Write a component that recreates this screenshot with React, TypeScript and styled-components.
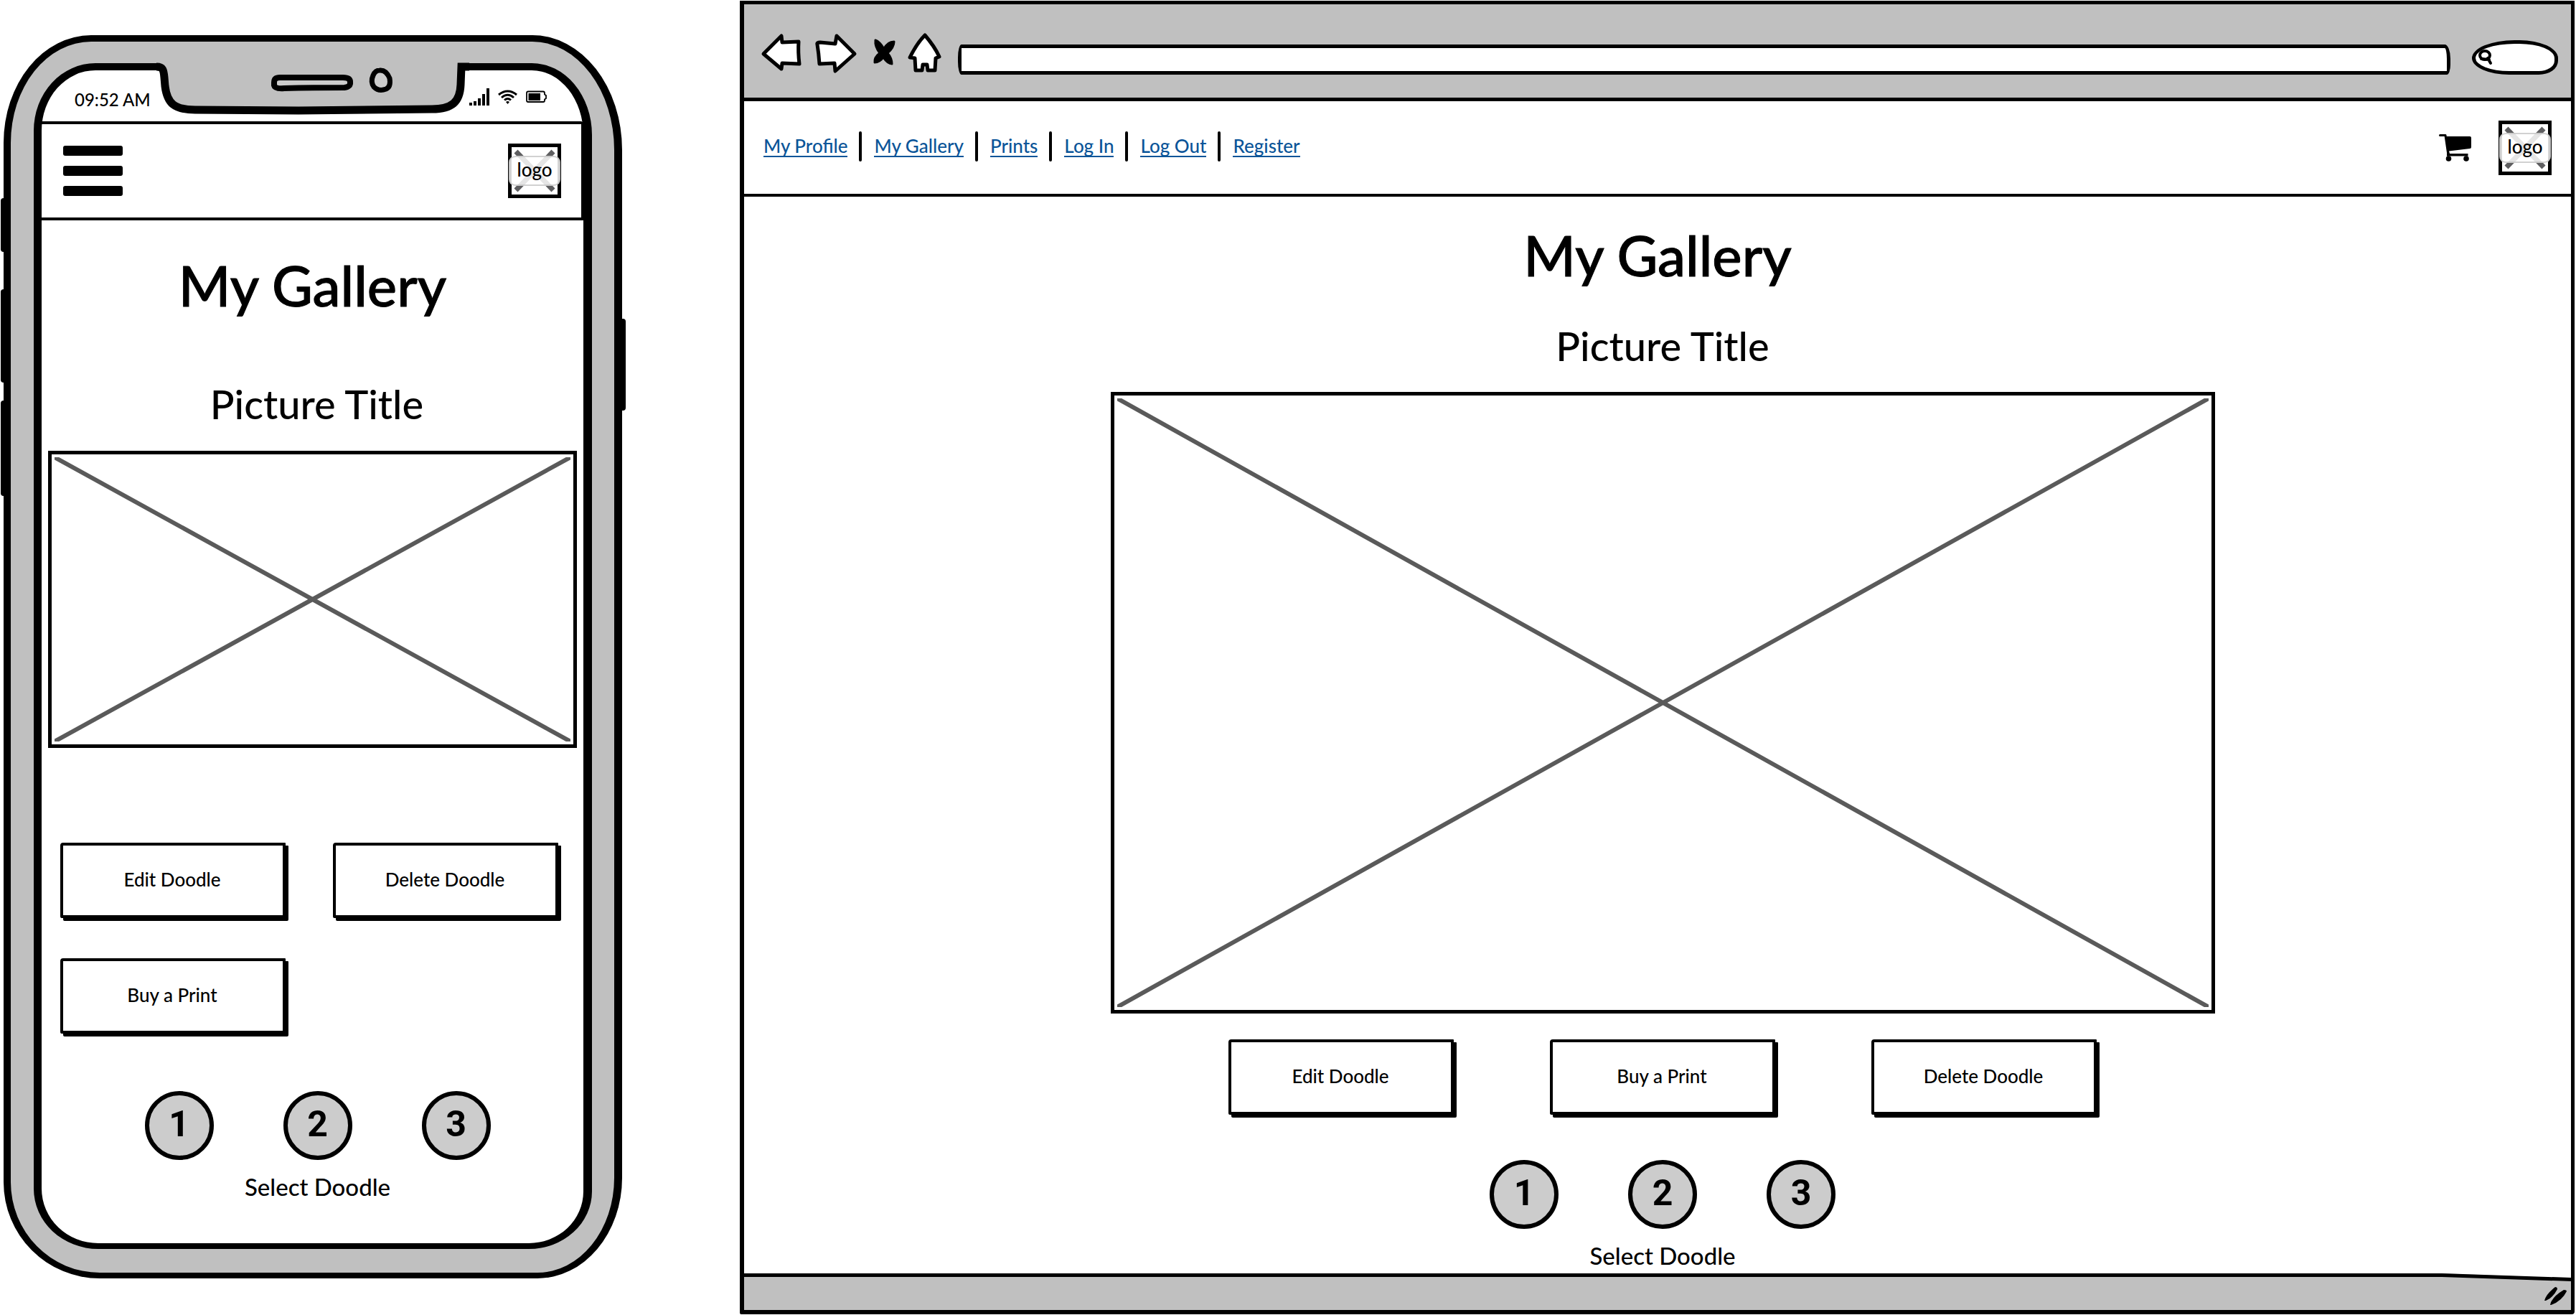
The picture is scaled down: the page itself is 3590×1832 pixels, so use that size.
import React from "react";
import styled, { createGlobalStyle } from "styled-components";

const INK = "#000";
const CHROME = "#c0c0c0";

const GlobalStyle = createGlobalStyle`
  *, *::before, *::after { box-sizing: border-box; }
  body {
    margin: 0;
    background: #fff;
    color: ${INK};
    font-family: Lato, "Open Sans", sans-serif;
    font-weight: 500;
  }
  button, input { font: inherit; color: inherit; }
  svg { display: block; }
`;

const Page = styled.main`
  display: grid;
  grid-template-columns: minmax(0, 862fr) minmax(0, 2557fr);
  column-gap: 164px;
  align-items: start;
  padding: 1px 2px 1px 5px;
`;

/* ---------- shared parts ---------- */

const Title = styled.h1`
  margin: 0;
  font-size: 78px;
  line-height: 98px;
  font-weight: 500;
  text-align: center;
  -webkit-text-stroke: 1px ${INK};
`;

const PictureTitle = styled.h2`
  margin: 0;
  font-size: 56px;
  line-height: 66px;
  font-weight: 500;
  text-align: center;
`;

const PictureFrame = styled.div<{ $ratio: string }>`
  width: 100%;
  aspect-ratio: ${(p) => p.$ratio};
  border: 5px solid ${INK};
  padding: 4px;
  background: #fff;

  svg { width: 100%; height: 100%; }
`;

const ActionButton = styled.button`
  height: 105px;
  padding: 0 2px 4px 0;
  border: 4px solid ${INK};
  border-radius: 4px 1px 2px 2px;
  background: #fff;
  box-shadow: 4px 4px 0 ${INK};
  font-size: 26px;
  line-height: 32px;
`;

const Pager = styled.div`
  display: flex;
  flex-direction: column;
  align-items: center;
  gap: 16px;
`;

const PagerRow = styled.div`
  display: flex;
  gap: 97px;
`;

const PagerButton = styled.button`
  width: 96px;
  height: 96px;
  padding: 0 0 4px;
  border: 6px solid ${INK};
  border-radius: 50%;
  background: #ccc;
  font-family: Roboto, Lato, sans-serif;
  font-size: 50px;
  line-height: 56px;
  font-weight: 700;
`;

const PagerLabel = styled.p`
  margin: 0;
  font-size: 33px;
  line-height: 42px;
`;

const LogoLink = styled.a`
  display: grid;
  grid-template: 66px / 64px;
  place-items: center;
  place-content: center;
  width: 74px;
  height: 76px;
  border: 5px solid ${INK};
  color: inherit;
  text-decoration: none;

  > * { grid-area: 1 / 1; }
`;

const LogoCaption = styled.span`
  width: 72px;
  height: 42px;
  border: 2px solid rgba(190, 190, 190, 0.7);
  border-radius: 9px;
  background: rgba(255, 255, 255, 0.84);
  font-size: 26px;
  line-height: 34px;
  text-align: center;
`;

function Logo() {
  return (
    <LogoLink href="#home">
      <svg width="64" height="66" viewBox="0 0 64 66" stroke="#5e5e60" strokeWidth="7" aria-hidden="true">
        <path d="M6 6 58 60M58 6 6 60" />
      </svg>
      <LogoCaption>logo</LogoCaption>
    </LogoLink>
  );
}

function Picture({ ratio }: { ratio: string }) {
  return (
    <PictureFrame $ratio={ratio} role="img" aria-label="Picture">
      <svg viewBox="0 0 100 100" preserveAspectRatio="none" stroke="#5a5a5a" strokeWidth="6" aria-hidden="true">
        <path d="M0 0 100 100M100 0 0 100" vectorEffect="non-scaling-stroke" />
      </svg>
    </PictureFrame>
  );
}

function DoodlePager() {
  return (
    <Pager>
      <PagerRow>
        {[1, 2, 3].map((n) => (
          <PagerButton key={n} type="button">{n}</PagerButton>
        ))}
      </PagerRow>
      <PagerLabel>Select Doodle</PagerLabel>
    </Pager>
  );
}

/* ---------- phone ---------- */

const PhoneBody = styled.section`
  position: relative;
  margin-top: 48px;
  padding: 30px 31px 33px 32px;
  border: solid ${INK};
  border-width: 9px 11px 8px 10px;
  border-radius: 122px 125px 118px 134px / 150px 160px 140px 134px;
  background: ${CHROME};
`;

const SideKey = styled.span<{ $side: "left" | "right"; $top: number; $height: number }>`
  position: absolute;
  ${(p) => p.$side}: ${(p) => (p.$side === "left" ? "-14px" : "-16px")};
  top: ${(p) => p.$top}px;
  width: 8px;
  height: ${(p) => p.$height}px;
  border-radius: 4px;
  background: ${INK};
`;

const Screen = styled.div`
  position: relative;
  border: solid ${INK};
  border-width: 10px 12px 8px 11px;
  border-radius: 86px 84px 88px 90px / 94px 100px 80px 84px;
  background: #fff;
`;

const Notch = styled.svg`
  position: absolute;
  top: -12px;
  left: 0;
  right: 0;
  margin: 0 auto;
`;

const StatusBar = styled.div`
  display: flex;
  justify-content: space-between;
  align-items: flex-end;
  height: 71px;
  padding: 0 51px 16px 46px;
  font-size: 24px;
  line-height: 28px;
`;

const StatusIcons = styled.div`
  display: flex;
  align-items: center;
  gap: 12px;
  padding-bottom: 6px;
`;

const PhoneHeader = styled.header`
  display: flex;
  justify-content: space-between;
  align-items: center;
  height: 138px;
  padding: 0 28px 0 30px;
  border: solid ${INK};
  border-width: 4px 3px 4px 0;
  border-radius: 0 4px 0 0;
`;

const MenuButton = styled.button`
  display: flex;
  flex-direction: column;
  gap: 14px;
  width: 83px;
  padding: 0;
  border: 0;
  background: none;
`;

const MenuBar = styled.span`
  height: 14px;
  border-radius: 3px;
  background: ${INK};
`;

const PhoneContent = styled.div`
  padding: 41px 0 58px;

  ${PictureTitle} { margin: 84px 0 32px; padding-left: 12px; }
`;

const PhonePicture = styled.div`
  padding: 0 9px;
`;

const PhoneActions = styled.div`
  display: grid;
  grid-template-columns: 1fr 1fr;
  gap: 56px 66px;
  padding: 132px 35px 80px 26px;
`;

const PhonePager = styled.div`
  padding-left: 14px;
`;

function Phone() {
  return (
    <PhoneBody aria-label="Mobile layout">
      <SideKey $side="left" $top={218} $height={75} />
      <SideKey $side="left" $top={345} $height={130} />
      <SideKey $side="left" $top={500} $height={133} />
      <SideKey $side="right" $top={386} $height={128} />
      <Screen>
        <Notch width="440" height="76" viewBox="0 0 440 76" aria-hidden="true">
          <path d="M2 0V2C11 3 13 9 14 20L15 36C18 58 26 67 56 67H386C414 67 426 58 428 34L429 12Q430 6 438 2V0Z" fill={CHROME} />
          <path d="M2 7C11 7 12 11 13 22L14 34C17 58 27 67 56 67L200 68 386 66C414 66 425 56 426 32L427 7H438" fill="none" stroke={INK} strokeWidth="11" />
          <path d="M174 22H262Q272 22 272 28Q273 35 264 36Q220 36 180 37Q167 38 166 33V29Q166 22 174 22Z" fill="#ccc" stroke={INK} strokeWidth="8" />
          <path d="M313 12Q322 11 327 23Q329 35 322 38Q312 42 305 35Q300 28 304 19Q307 12 313 12Z" fill="#ccc" stroke={INK} strokeWidth="7" />
        </Notch>
        <StatusBar>
          <span>09:52 AM</span>
          <StatusIcons>
            <svg width="28" height="24" viewBox="0 0 28 24" aria-label="Signal">
              <path d="M0 20h4v4H0zM6 18h4v6H6zM12 14h4v10h-4zM18 8h4v16h-4zM24 0h4v24h-4z" />
            </svg>
            <svg width="27" height="20" viewBox="0 0 27 20" fill="none" stroke={INK} strokeWidth="3" aria-label="Wi-Fi">
              <path d="M1 7Q13.500-3 26 7M5 11Q13.500 3.500 22 11M9 14.500Q13.500 10.500 18 14.500" />
              <path d="M11 17Q13.500 15 16 17L13.500 20Z" fill={INK} stroke="none" />
            </svg>
            <svg width="29" height="18" viewBox="0 0 29 18" aria-label="Battery">
              <path d="M3 1.500H24Q26 1.500 26 4V5.500L28 7V11L26 12.500V14Q26 16 24 16H3Q1 16 1 14V3.500Q1 1.500 3 1.500Z" fill="none" stroke={INK} strokeWidth="1.800" />
              <path d="M3.500 4H20V14H3.500Z" />
            </svg>
          </StatusIcons>
        </StatusBar>
        <PhoneHeader>
          <MenuButton type="button" aria-label="Menu">
            <MenuBar />
            <MenuBar />
            <MenuBar />
          </MenuButton>
          <Logo />
        </PhoneHeader>
        <PhoneContent>
          <Title>My Gallery</Title>
          <PictureTitle>Picture Title</PictureTitle>
          <PhonePicture>
            <Picture ratio="737 / 414" />
          </PhonePicture>
          <PhoneActions>
            <ActionButton type="button">Edit Doodle</ActionButton>
            <ActionButton type="button">Delete Doodle</ActionButton>
            <ActionButton type="button">Buy a Print</ActionButton>
          </PhoneActions>
          <PhonePager>
            <DoodlePager />
          </PhonePager>
        </PhoneContent>
      </Screen>
    </PhoneBody>
  );
}

/* ---------- browser ---------- */

const BrowserWindow = styled.section`
  border: solid ${INK};
  border-width: 5px 5px 6px 6px;
  border-radius: 0 0 4px 2px;
  background: #fff;
`;

const Toolbar = styled.div`
  display: flex;
  align-items: flex-end;
  gap: 21px;
  height: 135px;
  padding: 0 18px 32px 24px;
  border-bottom: 5px solid ${INK};
  background: ${CHROME};
`;

const ToolButton = styled.button`
  flex: none;
  padding: 0;
  border: 0;
  background: none;

  svg {
    fill: #fff;
    stroke: ${INK};
    stroke-width: 5px;
    stroke-linejoin: round;
    stroke-linecap: round;
    overflow: visible;
  }
`;

const AddressBar = styled.input`
  flex: 1;
  min-width: 0;
  height: 42px;
  padding: 0 12px;
  border: 5px solid ${INK};
  border-radius: 5px 8px 5px 5px / 18px 20px 14px 18px;
  background: #fff;
`;

const SearchBox = styled.label`
  display: flex;
  align-items: center;
  width: 120px;
  height: 48px;
  margin-left: 9px;
  padding-left: 4px;
  border: 5px solid ${INK};
  border-radius: 62px 56px 28px 54px / 26px 26px 20px 24px;
  background: #fff;
`;

const SearchInput = styled.input`
  width: 70px;
  padding: 0;
  border: 0;
  background: none;
  outline: 0;
`;

const SiteHeader = styled.header`
  display: flex;
  align-items: center;
  height: 133px;
  padding: 0 27px 0 27px;
  border-bottom: 4px solid ${INK};
`;

const SiteNav = styled.nav`
  display: flex;
  align-items: center;
  flex: 1;
  padding-bottom: 3px;
`;

const NavItem = styled.span`
  display: flex;
  align-items: center;

  & + &::before {
    content: "";
    width: 4px;
    height: 42px;
    margin: 0 17px 0 16px;
    border-radius: 2px;
    background: ${INK};
  }
`;

const NavLink = styled.a`
  border-bottom: 2px solid #0b5599;
  color: #0b5599;
  font-size: 26px;
  line-height: 28px;
  text-decoration: none;
`;

const CartLink = styled.a`
  margin-right: 38px;
  color: inherit;
`;

const SiteContent = styled.div`
  padding: 32px 0 4px;
`;

const Gallery = styled.div`
  display: flex;
  flex-direction: column;
  align-items: center;
  padding-left: 14px;

  ${PictureTitle} { margin: 45px 0 31px; }
`;

const GalleryPicture = styled.div`
  width: 100%;
  max-width: 1539px;
`;

const GalleryActions = styled.div`
  display: grid;
  grid-template-columns: repeat(3, 314px);
  gap: 134px;
  padding: 36px 0 63px;
`;

const WindowFooter = styled.footer`
  position: relative;
  display: flex;
  justify-content: flex-end;
  align-items: flex-end;
  height: 51px;
  padding: 0 4px 6px;
  border-top: 5px solid ${INK};
  background: ${CHROME};
`;

const FooterSlope = styled.svg`
  position: absolute;
  top: -5px;
  right: 0;
`;

function Browser() {
  const links = ["My Profile", "My Gallery", "Prints", "Log In", "Log Out", "Register"];
  return (
    <BrowserWindow aria-label="Desktop layout">
      <Toolbar>
        <ToolButton type="button" aria-label="Back">
          <svg width="56" height="58" viewBox="0 0 56 58">
            <path d="M3 29 28 4 29 13 52 12 Q51 26 53 43L29 42 28 50Z" />
          </svg>
        </ToolButton>
        <ToolButton type="button" aria-label="Forward">
          <svg width="56" height="58" viewBox="0 0 56 58">
            <path d="M1 16Q0 13 5 13L26 15 28 4 53 29 26 53 25 42 4 43Q3 28 1 16Z" />
          </svg>
        </ToolButton>
        <ToolButton type="button" aria-label="Stop">
          <svg width="32" height="58" viewBox="0 0 32 58">
            <path d="M5 10Q11 12 17 22Q22 12 31 12Q31 20 22 28Q28 35 28 43Q22 43 16 34Q11 41 4 41Q3 34 11 28Q4 19 5 10Z" style={{ fill: INK, strokeWidth: 3 }} />
          </svg>
        </ToolButton>
        <ToolButton type="button" aria-label="Home">
          <svg width="46" height="58" viewBox="0 0 46 58">
            <path d="M21 3C27 10 36 22 41 33L36 35 35 52 25 52 24 44H18L17 52H8L7 35 0 34C5 24 12 12 21 3Z" />
          </svg>
        </ToolButton>
        <AddressBar type="text" aria-label="Address" />
        <SearchBox aria-label="Search">
          <svg width="20" height="22" viewBox="0 0 20 22" fill="none" stroke={INK} strokeWidth="4" strokeLinecap="round" aria-hidden="true">
            <ellipse cx="9" cy="8" rx="7" ry="6" />
            <path d="M13 12 17 19M4 13 15 14" />
          </svg>
          <SearchInput type="text" aria-label="Search" />
        </SearchBox>
      </Toolbar>
      <SiteHeader>
        <SiteNav>
          {links.map((l) => (
            <NavItem key={l}>
              <NavLink href="#">{l}</NavLink>
            </NavItem>
          ))}
        </SiteNav>
        <CartLink href="#cart" aria-label="Cart">
          <svg width="45" height="38" viewBox="0 0 45 38">
            <path d="M1.500 1.500H9L13 29" fill="none" stroke={INK} strokeWidth="3" strokeLinecap="round" strokeLinejoin="round" />
            <path d="M8.500 3H43Q45 3 45 5V18Q45 20 43 20L14 23.500 15 27H40.500V30.500H11V27H12Z" />
            <circle cx="13.500" cy="34" r="3.800" />
            <circle cx="38" cy="34" r="3.800" />
          </svg>
        </CartLink>
        <Logo />
      </SiteHeader>
      <SiteContent>
        <Title>My Gallery</Title>
        <Gallery>
          <PictureTitle>Picture Title</PictureTitle>
          <GalleryPicture>
            <Picture ratio="1539 / 866" />
          </GalleryPicture>
          <GalleryActions>
            <ActionButton type="button">Edit Doodle</ActionButton>
            <ActionButton type="button">Buy a Print</ActionButton>
            <ActionButton type="button">Delete Doodle</ActionButton>
          </GalleryActions>
          <DoodlePager />
        </Gallery>
      </SiteContent>
      <WindowFooter>
        <FooterSlope width="180" height="12" viewBox="0 0 180 12" aria-hidden="true">
          <path d="M0 0H180V12H0Z" fill={CHROME} />
          <path d="M0 0H180V7Z" fill="#fff" />
          <path d="M0 0 180 6V11L0 5Z" fill={INK} />
        </FooterSlope>
        <svg width="34" height="26" viewBox="0 0 34 26" aria-hidden="true">
          <path d="M1 19Q3 10 16 0Q19 0 19 3Q13 15 3 19ZM9 25Q11 14 28 4Q32 4 32 6Q25 20 10 25Z" />
        </svg>
      </WindowFooter>
    </BrowserWindow>
  );
}

export default function App() {
  return (
    <>
      <GlobalStyle />
      <Page>
        <Phone />
        <Browser />
      </Page>
    </>
  );
}
